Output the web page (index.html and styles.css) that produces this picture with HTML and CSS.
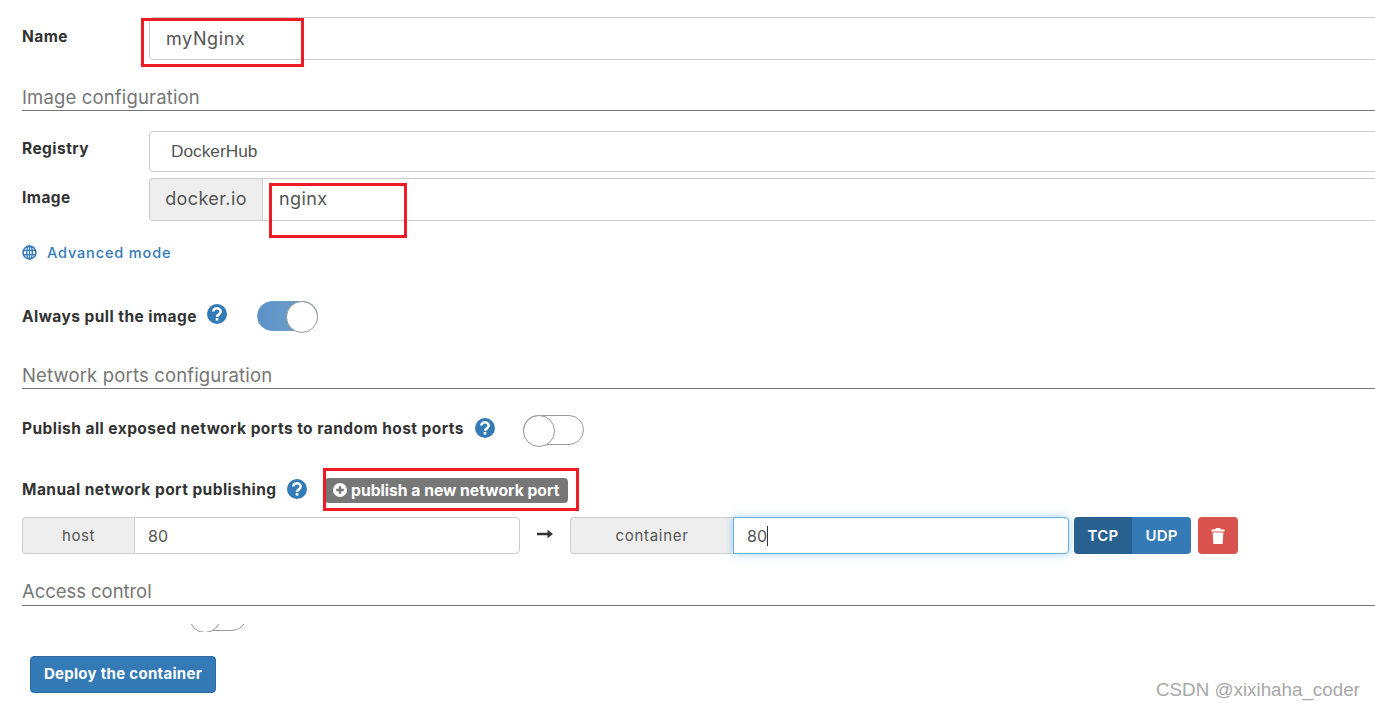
FILE: index.html
```html
<!DOCTYPE html>
<html lang="en">
<head>
<meta charset="utf-8">
<title>Deploy container</title>
<link rel="stylesheet" href="styles.css">
</head>
<body>
<main class="form">
  <div class="row row-name">
    <label class="label">Name</label>
    <div class="field field-name">myNginx</div>
  </div>
  <h2 class="heading heading-image">Image configuration</h2>
  <div class="row row-registry">
    <label class="label">Registry</label>
    <div class="field field-registry">DockerHub</div>
  </div>
  <div class="row row-image">
    <label class="label">Image</label>
    <div class="group group-image">
      <span class="addon addon-image">docker.io</span>
      <div class="field field-image">nginx</div>
    </div>
  </div>
  <a class="advanced">
    <svg class="globe" viewBox="0 0 14 14" width="15" height="15"><circle cx="7" cy="7" r="6" fill="none" stroke="#337ab7" stroke-width="1.5"/><ellipse cx="7" cy="7" rx="2.6" ry="6" fill="none" stroke="#337ab7" stroke-width="1.3"/><path d="M1 5h12M1 9h12M7 1v12" stroke="#337ab7" stroke-width="1.2"/></svg>
    Advanced mode
  </a>
  <div class="row row-pull">
    <span class="check-label label-pull">Always pull the image</span>
    <svg class="help" viewBox="0 0 20 20" width="20" height="20"><circle cx="10" cy="10" r="10" fill="#337ab7"/><path d="M6.300 7.500a3.700 3.300 0 1 1 6 2.600c-1.300 1-2.300 1.300-2.300 3" fill="none" stroke="#fff" stroke-width="2.500"/><rect x="8.700" y="14" width="2.600" height="2.600" fill="#fff"/></svg>
    <span class="switch switch-on switch-pull"><span class="knob"></span></span>
  </div>
  <h2 class="heading heading-network">Network ports configuration</h2>
  <div class="row row-publish">
    <span class="check-label label-publish">Publish all exposed network ports to random host ports</span>
    <svg class="help" viewBox="0 0 20 20" width="20" height="20"><circle cx="10" cy="10" r="10" fill="#337ab7"/><path d="M6.300 7.500a3.700 3.300 0 1 1 6 2.600c-1.300 1-2.300 1.300-2.300 3" fill="none" stroke="#fff" stroke-width="2.500"/><rect x="8.700" y="14" width="2.600" height="2.600" fill="#fff"/></svg>
    <span class="switch switch-publish"><span class="knob"></span></span>
  </div>
  <div class="row row-manual">
    <span class="check-label label-manual">Manual network port publishing</span>
    <svg class="help" viewBox="0 0 20 20" width="20" height="20"><circle cx="10" cy="10" r="10" fill="#337ab7"/><path d="M6.300 7.500a3.700 3.300 0 1 1 6 2.600c-1.300 1-2.300 1.300-2.300 3" fill="none" stroke="#fff" stroke-width="2.500"/><rect x="8.700" y="14" width="2.600" height="2.600" fill="#fff"/></svg>
    <span class="badge">
      <svg viewBox="0 0 14 14" width="14" height="14"><circle cx="7" cy="7" r="7" fill="#fff"/><path d="M3.200 5.800h2.600V3.200h2.400v2.600h2.600v2.400H8.200v2.600H5.800V8.200H3.200z" fill="#777"/></svg>
      publish a new network port
    </span>
  </div>
  <div class="ports">
    <div class="group group-host">
      <span class="addon addon-host">host</span>
      <div class="field field-port">80</div>
    </div>
    <span class="arrow">
      <svg viewBox="0 0 16 10" width="16" height="10"><path d="M0 3.800h10.500V.8L16 5l-5.500 4.200v-3H0z" fill="#333"/></svg>
    </span>
    <div class="group group-container">
      <span class="addon addon-container">container</span>
      <div class="field field-port field-focus">80<span class="caret"></span></div>
    </div>
    <div class="proto">
      <span class="proto-btn proto-active">TCP</span>
      <span class="proto-btn proto-udp">UDP</span>
    </div>
    <span class="trash">
      <svg viewBox="0 0 14 16" width="14" height="16"><path d="M5 0h4l1 1.500h3.500v2H.5v-2H4zM1.600 4.500h10.800l-.8 11.500H2.400z" fill="#fff"/></svg>
    </span>
  </div>
  <h2 class="heading heading-access">Access control</h2>
  <div class="clip">
    <span class="switch switch-clip"><span class="knob"></span></span>
  </div>
  <button class="deploy">Deploy the container</button>
</main>
<div class="mark mark-name"></div>
<div class="mark mark-image"></div>
<div class="mark mark-publish"></div>
<div class="watermark">CSDN @xixihaha_coder</div>
</body>
</html>
```

FILE: styles.css
```css
* { box-sizing: border-box; }
html, body { margin: 0; height: 708px; overflow: hidden; background: #fff; }
body { position: relative; font-family: Inter, "Open Sans", sans-serif; font-size: 15.5px; color: #333; }
.form { width: 1400px; padding: 17px 0 0 22px; }
.row { display: flex; align-items: center; }
.label { width: 127px; flex: none; font-weight: 700; font-size: 15.5px; letter-spacing: .45px; color: #333; }
.field { flex: 1; background: #fff; border: 1px solid #ccc; display: flex; align-items: center; color: #555; font-size: 18px; }
.row-name { height: 43px; }
.row-name .label { padding-bottom: 5px; }
.field-name { height: 43px; padding-left: 16px; border-radius: 4px 0 0 4px; letter-spacing: .6px; }
.heading { margin: 0 25px 0 0; font-size: 18.5px; font-weight: 400; letter-spacing: .15px; color: #767676; border-bottom: 1px solid #777; height: 28px; line-height: 28px; }
.heading-image { margin-top: 23px; }
.row-registry { margin-top: 20px; height: 41px; }
.row-registry .label { padding-bottom: 7px; }
.field-registry { height: 41px; padding-left: 21px; border-radius: 4px 0 0 4px; font-family: "Liberation Sans", sans-serif; font-size: 17.3px; }
.row-image { margin-top: 6px; height: 43px; }
.row-image .label { padding-bottom: 4px; }
.group { display: flex; }
.group-image { flex: 1; height: 43px; }
.addon { background: #eee; border: 1px solid #ccc; border-right: 0; border-radius: 4px 0 0 4px; color: #555; display: flex; align-items: center; justify-content: center; flex: none; }
.addon-image { width: 113px; font-size: 18px; letter-spacing: .4px; padding-bottom: 2px; }
.field-image { padding-left: 16px; padding-bottom: 3px; letter-spacing: .4px; }
.advanced { display: flex; align-items: center; gap: 10px; margin-top: 23px; height: 16px; color: #337ab7; font-size: 14.5px; font-weight: 500; letter-spacing: .85px; }
.row-pull { margin-top: 40px; height: 32px; }
.check-label { font-weight: 700; font-size: 15.5px; letter-spacing: .45px; color: #333; white-space: nowrap; flex: none; }
.label-pull { width: 174px; padding-top: 1px; }
.label-publish { width: 442px; padding-bottom: 3px; }
.label-manual { width: 254px; padding-bottom: 3px; }
.help { margin-left: 11px; flex: none; position: relative; top: -2px; }
.switch { display: block; position: relative; width: 61px; height: 30px; border: 1px solid #999; border-radius: 16px; background: #fff; flex: none; }
.switch-on { background: linear-gradient(90deg, #5a92c6, #75a3cb); border-color: #6b9cc8; }
.knob { position: absolute; top: -1px; left: -1px; width: 32px; height: 32px; border-radius: 50%; background: #fff; border: 1px solid #999; }
.switch-on .knob { left: auto; right: -1px; }
.switch-pull { margin-left: 30px; }
.heading-network { margin-top: 29px; }
.row-publish { margin-top: 25px; height: 32px; }
.switch-publish { margin-left: 28px; }
.row-manual { margin-top: 32px; height: 26px; }
.badge { display: flex; align-items: center; gap: 4px; margin-left: 18px; height: 25px; width: 243px; padding-left: 8px; background: #777; color: #fff; border-radius: 4px; font-size: 15.7px; font-weight: 700; white-space: nowrap; position: relative; top: -1px; }
.ports { display: flex; margin-top: 13px; height: 37px; }
.group-host { width: 498px; }
.group-container { width: 499px; }
.addon-host { width: 112px; font-size: 15px; letter-spacing: .6px; padding-bottom: 1px; }
.addon-container { width: 163px; font-size: 15px; letter-spacing: .7px; padding-bottom: 1px; }
.field-port { font-size: 16px; padding-left: 13px; border-radius: 0 4px 4px 0; color: #555; }
.field-focus { border-color: #66afe9; box-shadow: 0 0 8px rgba(102, 175, 233, .6); position: relative; }
.caret { width: 1px; height: 20px; background: #333; }
.arrow { width: 50px; display: flex; align-items: center; justify-content: center; padding-bottom: 3px; }
.proto { display: flex; margin-left: 5px; }
.proto-btn { background: #337ab7; color: #fff; font-weight: 600; font-size: 15px; letter-spacing: .2px; display: flex; align-items: center; justify-content: center; }
.proto-active { width: 58px; background: #286090; border-radius: 4px 0 0 4px; }
.proto-udp { width: 59px; border-radius: 0 4px 4px 0; }
.trash { width: 40px; margin-left: 7px; background: #d9534f; border-radius: 4px; display: flex; align-items: center; justify-content: center; }
.heading-access { margin-top: 24px; line-height: 26px; letter-spacing: -.05px; }
.clip { margin: 18px 0 0 167px; height: 8px; overflow: hidden; position: relative; width: 58px; }
.switch-clip { position: absolute; left: 0; bottom: 1px; width: 58px; }
.deploy { display: block; margin: 24px 0 0 8px; width: 186px; height: 37px; background: #337ab7; border: 1px solid #2e6da4; border-radius: 4px; color: #fff; font: 700 15px Inter, sans-serif; letter-spacing: .3px; padding-bottom: 3px; }
.mark { position: absolute; border: 3px solid #ed1c24; }
.mark-name { left: 141px; top: 18px; width: 163px; height: 49px; }
.mark-image { left: 269px; top: 183px; width: 138px; height: 55px; }
.mark-publish { left: 323px; top: 468px; width: 256px; height: 43px; }
.watermark { position: absolute; left: 1156px; top: 679px; font: 18.8px "Liberation Sans", sans-serif; color: #a8a8a8; white-space: nowrap; }
```
